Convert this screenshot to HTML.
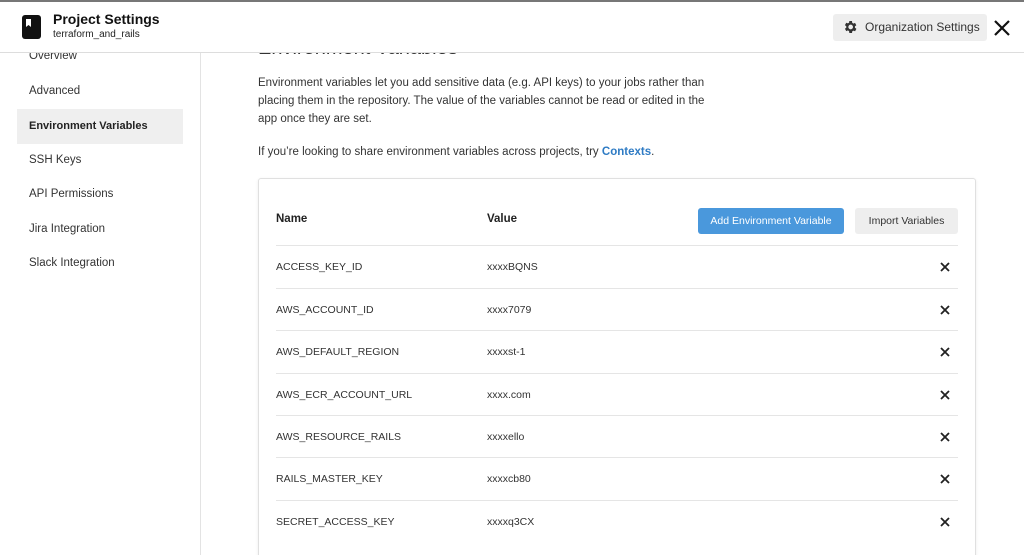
<!DOCTYPE html><html><head><style>
*{margin:0;padding:0;box-sizing:border-box}
html,body{width:1024px;height:555px;overflow:hidden}
body{background:#fff;font-family:"Liberation Sans",sans-serif;color:#333;position:relative}
.hdr{position:absolute;top:0;left:0;width:1024px;height:53px;background:#fff;border-top:2px solid #777;border-bottom:1px solid #ddd;z-index:5}
.side{position:absolute;top:53px;left:0;width:201px;height:502px;border-right:1px solid #e3e3e3}
.nav{position:absolute;left:17px;width:166px;height:35px;line-height:35px;padding-left:12px;font-size:11.5px;color:#333}
.sel{background:#efefef;font-weight:bold;color:#222;font-size:11px}
.h{position:absolute;left:258px;top:37px;font-size:20px;color:#333;z-index:1}
.p{position:absolute;left:258px;font-size:11.5px;line-height:18px;color:#333}
.card{position:absolute;left:258px;top:178px;width:718px;height:380px;border:1px solid #e0e0e0;border-radius:3px;box-shadow:0 1px 3px rgba(0,0,0,.08)}
.row{position:absolute;left:17px;width:682px;height:43px;border-top:1px solid #e5e5e5;font-size:10.5px;color:#333}
.row span{position:absolute;top:15px}
.x{position:absolute;right:8px;top:16px}
</style></head><body>
<div class="hdr">
<div style="position:absolute;left:22px;top:13px;width:19px;height:24px;background:#111;border-radius:3px"><div style="position:absolute;left:4px;top:4px;width:5px;height:8px;background:#fff;clip-path:polygon(0 0,100% 0,100% 100%,50% 75%,0 100%)"></div></div>
<div style="position:absolute;left:53px;top:9px;font-size:14px;font-weight:bold;color:#111">Project Settings</div>
<div style="position:absolute;left:53px;top:27px;font-size:10px;color:#222">terraform_and_rails</div>
<div style="position:absolute;left:833px;top:12px;width:154px;height:27px;background:#eee;border-radius:3px;font-size:12px;color:#333;line-height:27px;padding-left:32px">Organization Settings</div>
<svg style="position:absolute;left:842px;top:17px" width="16" height="16" viewBox="0 0 24 24"><path fill="#333" d="M19.4 13a7.5 7.5 0 000-2l2.1-1.6-2-3.5-2.5 1a7 7 0 00-1.7-1L15 3h-4l-.4 2.6a7 7 0 00-1.7 1l-2.5-1-2 3.5L6.5 11a7.5 7.5 0 000 2l-2.1 1.6 2 3.5 2.5-1a7 7 0 001.7 1L11 21h4l.4-2.6a7 7 0 001.7-1l2.5 1 2-3.5zM13 15.5a3.5 3.5 0 110-7 3.5 3.5 0 010 7z"/></svg>
<svg style="position:absolute;left:994px;top:18px" width="16" height="16" viewBox="0 0 16 16"><path d="M1 1L15 15M15 1L1 15" stroke="#111" stroke-width="2.2"/></svg>
</div>
<div class="side">
<div class="nav" style="top:-14px">Overview</div>
<div class="nav" style="top:21px">Advanced</div>
<div class="nav sel" style="top:56px">Environment Variables</div>
<div class="nav" style="top:90px">SSH Keys</div>
<div class="nav" style="top:124px">API Permissions</div>
<div class="nav" style="top:159px">Jira Integration</div>
<div class="nav" style="top:193px">Slack Integration</div>
</div>
<div class="h">Environment Variables</div>
<div class="p" style="top:74px;width:460px">Environment variables let you add sensitive data (e.g. API keys) to your jobs rather than placing them in the repository. The value of the variables cannot be read or edited in the app once they are set.</div>
<div class="p" style="top:143px">If you’re looking to share environment variables across projects, try <b style="color:#2e7bc4">Contexts</b>.</div>
<div class="card">
<div style="position:absolute;left:17px;top:34px;font-size:11.5px;font-weight:bold;color:#222">Name</div>
<div style="position:absolute;left:228px;top:34px;font-size:11.5px;font-weight:bold;color:#222">Value</div>
<div style="position:absolute;left:439px;top:29px;width:146px;height:26px;background:#4a98dc;border-radius:3px;color:#fff;font-size:10.5px;line-height:26px;text-align:center">Add Environment Variable</div>
<div style="position:absolute;left:596px;top:29px;width:103px;height:26px;background:#eee;border-radius:3px;color:#333;font-size:10.5px;line-height:26px;text-align:center">Import Variables</div>
<div class="row" style="top:66px"><span style="left:0">ACCESS_KEY_ID</span><span style="left:211px">xxxxBQNS</span><svg class="x" width="10" height="10"><path d="M1 1L9 9M9 1L1 9" stroke="#222" stroke-width="1.8"/></svg></div>
<div class="row" style="top:109px"><span style="left:0">AWS_ACCOUNT_ID</span><span style="left:211px">xxxx7079</span><svg class="x" width="10" height="10"><path d="M1 1L9 9M9 1L1 9" stroke="#222" stroke-width="1.8"/></svg></div>
<div class="row" style="top:151px"><span style="left:0">AWS_DEFAULT_REGION</span><span style="left:211px">xxxxst-1</span><svg class="x" width="10" height="10"><path d="M1 1L9 9M9 1L1 9" stroke="#222" stroke-width="1.8"/></svg></div>
<div class="row" style="top:194px"><span style="left:0">AWS_ECR_ACCOUNT_URL</span><span style="left:211px">xxxx.com</span><svg class="x" width="10" height="10"><path d="M1 1L9 9M9 1L1 9" stroke="#222" stroke-width="1.8"/></svg></div>
<div class="row" style="top:236px"><span style="left:0">AWS_RESOURCE_RAILS</span><span style="left:211px">xxxxello</span><svg class="x" width="10" height="10"><path d="M1 1L9 9M9 1L1 9" stroke="#222" stroke-width="1.8"/></svg></div>
<div class="row" style="top:278px"><span style="left:0">RAILS_MASTER_KEY</span><span style="left:211px">xxxxcb80</span><svg class="x" width="10" height="10"><path d="M1 1L9 9M9 1L1 9" stroke="#222" stroke-width="1.8"/></svg></div>
<div class="row" style="top:321px"><span style="left:0">SECRET_ACCESS_KEY</span><span style="left:211px">xxxxq3CX</span><svg class="x" width="10" height="10"><path d="M1 1L9 9M9 1L1 9" stroke="#222" stroke-width="1.8"/></svg></div>
</div>
</body></html>
